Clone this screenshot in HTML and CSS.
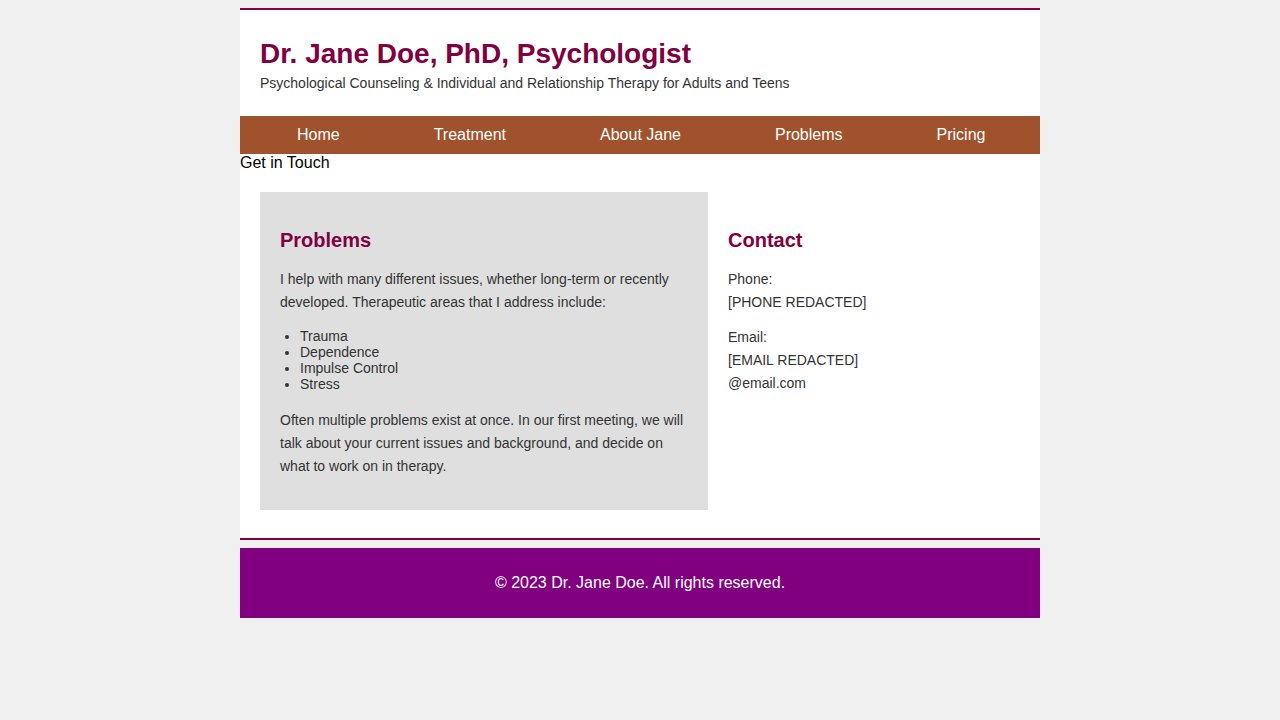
FILE: index.html
```html
<!DOCTYPE html>
<html lang="en">
<head>
<meta charset="utf-8">
<title>Dr. Jane Doe, PhD, Psychologist</title>
<link rel="stylesheet" href="styles.css">
</head>
<body>
<div class="page">
  <header class="site-header">
    <h1 class="title">Dr. Jane Doe, PhD, Psychologist</h1>
    <p class="tagline">Psychological Counseling &amp; Individual and Relationship Therapy for Adults and Teens</p>
  </header>
  <nav class="nav">
    <ul class="nav-list">
      <li><a href="#">Home</a></li>
      <li><a href="#">Treatment</a></li>
      <li><a href="#">About Jane</a></li>
      <li><a href="#">Problems</a></li>
      <li><a href="#">Pricing</a></li>
    </ul>
  </nav>
  <div class="overflow-link">Get in Touch</div>
  <main class="main">
    <section class="problems">
      <h2 class="section-title">Problems</h2>
      <p class="text">I help with many different issues, whether long-term or recently developed. Therapeutic areas that I address include:</p>
      <ul class="issue-list">
        <li>Trauma</li>
        <li>Dependence</li>
        <li>Impulse Control</li>
        <li>Stress</li>
      </ul>
      <p class="text">Often multiple problems exist at once. In our first meeting, we will talk about your current issues and background, and decide on what to work on in therapy.</p>
    </section>
    <aside class="contact">
      <h2 class="section-title">Contact</h2>
      <p class="text">Phone:<br>[PHONE REDACTED]</p>
      <p class="text">Email:<br>[EMAIL REDACTED]<br>@email.com</p>
    </aside>
  </main>
</div>
<footer class="footer">© 2023 Dr. Jane Doe. All rights reserved.</footer>
</body>
</html>
```
FILE: styles.css
```css
html, body {
  margin: 0;
  padding: 0;
}
body {
  background: #f0f0f0;
  font-family: "Liberation Sans", Arial, sans-serif;
  color: #000;
  padding-top: 8px;
}
.page {
  width: 800px;
  margin: 0 auto;
  background: #fff;
  border-top: 2px solid #800040;
  border-bottom: 2px solid #800040;
}
.site-header {
  padding: 22px 20px 26px;
}
.title {
  margin: 0;
  font-size: 28px;
  line-height: 44px;
  color: #800040;
  font-weight: bold;
}
.tagline {
  margin: 0;
  font-size: 14px;
  line-height: 14px;
  color: #333;
}
.nav {
  background: #a0522d;
  height: 38px;
}
.nav-list {
  list-style: none;
  margin: 0;
  padding: 0 0 0 10px;
  display: flex;
}
.nav-list a {
  display: block;
  padding: 0 47px;
  line-height: 38px;
  color: #fff;
  text-decoration: none;
  font-size: 16px;
}
.overflow-link {
  font-size: 16px;
  line-height: 18px;
  color: #000;
}
.main {
  display: flex;
  align-items: flex-start;
  padding: 20px 20px 28px;
}
.problems {
  width: 448px;
  box-sizing: border-box;
  padding: 20px;
  background: #dfdfdf;
}
.contact {
  width: 312px;
  box-sizing: border-box;
  padding: 20px;
}
.section-title {
  margin: 17px 0 16px;
  font-size: 20px;
  line-height: 23px;
  color: #800040;
  font-weight: bold;
}
.text {
  margin: 0 0 12px;
  font-size: 14px;
  line-height: 23px;
  color: #333;
}
.issue-list {
  margin: 14px 0 17px;
  padding-left: 20px;
  font-size: 14px;
  line-height: 16px;
  color: #333;
}
.footer {
  width: 800px;
  margin: 8px auto 0;
  background: #800080;
  color: #fff;
  text-align: center;
  font-size: 16px;
  line-height: 18px;
  padding: 26px 0;
}
```
